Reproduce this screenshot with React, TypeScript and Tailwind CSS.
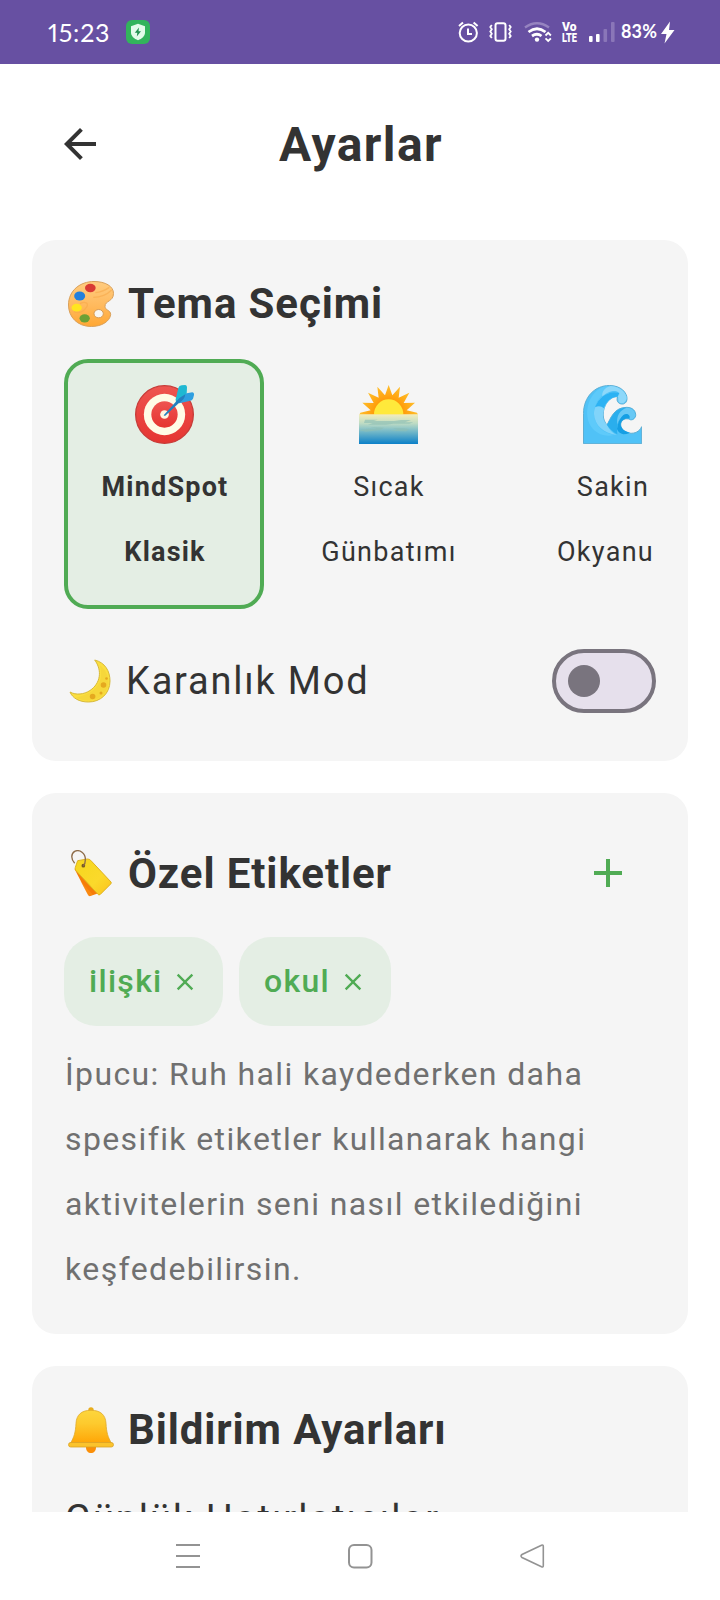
import React from "react";

function StatusBar() {
  return (
    <header className="flex h-16 shrink-0 items-center bg-[#6750a2] pl-12 text-white">
      <span className="w-[77px] font-['Lato'] text-[25px] leading-none tracking-[0.8px] proportional-nums">15:23</span>
      <svg width="26" height="26" viewBox="0 0 26 26">
        <rect x="1" y="1" width="24" height="24" rx="6" fill="#32b45c" />
        <path d="M13 4.8 20 7.2v6c0 4-3 6.400-7 8-4-1.600-7-4-7-8v-6z" fill="#e3fbea" />
        <path d="M14 8.500 9.800 13.800h2.500l-.5 3.700 4.200-5.200h-2.500z" fill="#219150" />
      </svg>
      <svg className="ml-[307px]" width="218" height="32" viewBox="458 16 218 32" fill="none">
        <g stroke="#fff" strokeWidth="2">
          <circle cx="468.300" cy="33" r="8.600" />
          <path d="M468 28.500v5.500h4M459 26l4-3.500M477.600 26l-4-3.500" />
          <rect x="495.500" y="23.200" width="10" height="17.600" rx="2" />
          <path strokeWidth="1.800" d="M491.800 25l-1.500 2 1.500 2.200-1.500 2.300 1.500 2.300-1.500 2.200 1.500 2M509.200 25l1.500 2-1.500 2.200 1.500 2.300-1.500 2.300 1.500 2.200-1.500 2" />
        </g>
        <path d="M525 27.500q12-8.500 24 0" stroke="#9684c0" strokeWidth="2.400" />
        <path d="M528.500 32q8.500-6.500 17 0M532 36q5-3.500 9.500 0" stroke="#fff" strokeWidth="2.800" />
        <circle cx="537" cy="39.600" r="2.200" fill="#fff" />
        <path d="M545.500 35.500l2.700-2.700 2.700 2.700M545.500 38.300l2.700 2.700 2.700-2.700" stroke="#fff" strokeWidth="1.800" />
        <rect x="589" y="36" width="3.600" height="6" rx="1" fill="#fff" />
        <rect x="596" y="34" width="3.600" height="8" rx="1" fill="#fff" />
        <rect x="603.500" y="29" width="3.600" height="13" rx="1" fill="#8a76b8" />
        <rect x="611" y="22" width="3.600" height="20" rx="1" fill="#8a76b8" />
        <text x="562" y="31.300" fill="#fff" fontFamily="Roboto" fontWeight="900" fontSize="12" textLength="14.500" lengthAdjust="spacingAndGlyphs">Vo</text>
        <text x="562" y="41.800" fill="#fff" fontFamily="Roboto" fontWeight="900" fontSize="12.500" textLength="15" lengthAdjust="spacingAndGlyphs">LTE</text>
        <text x="621" y="38" fill="#fff" fontFamily="Lato" fontWeight="700" fontSize="18" textLength="36">83%</text>
        <path d="M670 21.500 661 34h5.500l-2 9.500L674.500 30h-5.500z" fill="#fff" />
      </svg>
    </header>
  );
}

function Palette() {
  return (
    <svg width="46" height="46" viewBox="114 123 138 138">
      <defs>
        <linearGradient id="wood" x1="0" y1="0" x2="0" y2="1">
          <stop offset="0" stopColor="#ffcc80" />
          <stop offset=".55" stopColor="#ffb95c" />
          <stop offset="1" stopColor="#ffa733" />
        </linearGradient>
      </defs>
      <path d="M192 124.500C226 124.500 250.500 139 250.500 160C250.500 186 225 181 225 199C225 212 242 209 242 224C239 245 214 259.500 184 259.500C141 259.500 115.500 230 115.500 195C115.500 151 151 124.500 192 124.500Z" fill="url(#wood)" stroke="#d9a05a" strokeWidth="3" />
      <path d="M245 150q-22 22-55 22M238 142q-20 14-42 16M132 215c20 8 30-2 38-14s-6-18-20-10" fill="none" stroke="#f7a94a" strokeWidth="4" opacity=".6" />
      <ellipse cx="206" cy="221" rx="14" ry="12.500" fill="#f8f6f2" stroke="#d69b55" strokeWidth="3" />
      <ellipse cx="181" cy="144" rx="16" ry="12.500" fill="#d93a34" />
      <ellipse cx="149" cy="168" rx="16.500" ry="13.500" fill="#2380dc" />
      <ellipse cx="140" cy="203" rx="15.500" ry="11.500" fill="#ffe51f" />
      <ellipse cx="164" cy="235" rx="15.500" ry="12.500" fill="#6ba035" />
    </svg>
  );
}

function Target() {
  return (
    <svg width="59" height="59" viewBox="75 45 177 177">
      <defs>
        <linearGradient id="board" x1="0" y1="0" x2="0" y2="1">
          <stop offset="0" stopColor="#ee5550" />
          <stop offset=".5" stopColor="#ea4440" />
          <stop offset="1" stopColor="#e53531" />
        </linearGradient>
      </defs>
      <circle cx="163.500" cy="133.500" r="86.500" fill="url(#board)" stroke="#c73c39" strokeWidth="4" />
      <circle cx="163.500" cy="133.500" r="62" fill="#fffbe6" />
      <circle cx="163.500" cy="133.500" r="39.500" fill="url(#board)" />
      <circle cx="163.500" cy="133.500" r="13" fill="#fff5e0" />
      <path d="M197 88 205 54Q207 47 215 46L226 45Q231 46 231 52L230 72L206 98L198 98Z" fill="#1fb8d2" />
      <path d="M230 70 247 67Q253 68 252 75L249 86Q247 92 238 93L208 100L200 96Z" fill="#2f9fe0" />
      <path d="M161 136 197 96Q208 82 226 73Q224 90 206 100L165 138Z" fill="#2480bf" />
    </svg>
  );
}

function Sunset() {
  return (
    <svg width="59" height="59" viewBox="57 45 177 177">
      <defs>
        <linearGradient id="sea" x1="0" y1="0" x2="0" y2="1">
          <stop offset="0" stopColor="#f3edbb" />
          <stop offset=".3" stopColor="#bfdcc4" />
          <stop offset=".6" stopColor="#6fb6c8" />
          <stop offset="1" stopColor="#0b80c8" />
        </linearGradient>
        <radialGradient id="rays" gradientUnits="userSpaceOnUse" cx="146" cy="132" r="88">
          <stop offset=".5" stopColor="#ff9c0a" />
          <stop offset="1" stopColor="#ffc02c" />
        </radialGradient>
      </defs>
      <path d="M58 134 61 128 92 121 67 98 101 99 84 68 116 83 112 50 135 76 146 45 157 76 180 50 176 83 208 68 191 99 225 98 200 121 231 128 234 134Z" fill="url(#rays)" />
      <path d="M102 134a44 46 0 0 1 88 0z" fill="#ffe93b" />
      <rect x="57" y="133" width="177" height="89" fill="url(#sea)" />
      <path d="M75 149h38l-12 4h62l20-3h30l-18 7h25l-12 4h-48l-22 3h-54l14-5h-26zM57 181l25-5h28l-18-5 40 2-12 7-42 5zM150 183l22-4-14-4h36l14 3-10 6z" fill="#8ebfb5" opacity=".65" />
    </svg>
  );
}

function Wave() {
  return (
    <svg width="59" height="59" viewBox="729 45 177 177">
      <path d="M730.500 221V130C731 80 765 46.500 808 46.500C845 46.500 861 70 861 85C861 98 853 103 845 102C834 101 828 92 833 80C810 78 789 105 789.500 135C790 148 795 158 801 165C812 145 822 112 860 112C880 112 888 125 887 137C884 150 872 152 866 147C852 144 842 152 842 165C846 194 892 200 905 170V221Z" fill="#50c2f7" stroke="#5eaed3" strokeWidth="3" />
      <path d="M808 48C842 48 860 70 860 85C858 101 844 103 837 96C833 90 836 82 833 78C839 73 838 65 826 63C788 62 762 98 762 132C764 170 790 188 822 195C780 205 745 176 742 138C738 88 770 48 808 48Z" fill="#5ecafa" />
      <path d="M812 48C843 50 860 70 860 85C857 101 844 103 836 96C834 88 836 80 833 78C840 72 837 64 826 63C812 61 797 70 787 79C785 66 794 52 812 48Z" fill="#8dd8fa" />
      <path d="M840 72C800 54 763 94 762 132C764 166 790 190 830 195Q810 185 801 164C790 153 789 143 789.500 135C790 105 812 78 833 80Z" fill="#81d4fa" />
      <path d="M838 69C807 59 777 80 765 112Q780 105 792 115C798 95 814 79 833 80Z" fill="#2cb2f3" />
      <path d="M801 165C815 144 822 113 860 113C876 112 887 125 886 137C881 149 872 151 867 145C872 136 862 130 852 136C839 145 828 164 832 193Q814 184 801 165Z" fill="#2aaeed" />
      <path d="M860 113C876 112 887 125 886 137C881 149 872 151 867 145C872 136 864 131 852 136C842 142 836 150 832 164C828 137 840 120 860 113Z" fill="#69c9f5" />
      <path d="M868 146C872 134 860 128 850 135Q835 148 831 177Q836 190 850 193Q860 193 870 188C853 184 842 175 842 163C843 151 855 143 868 146Z" fill="#159fe4" />
    </svg>
  );
}

function Moon() {
  return (
    <svg width="42" height="44" viewBox="69 658.500 42 44">
      <path d="M94.700 659.500C105 662 110 670.500 110 680.500C110 693 100.500 701.500 88.500 701.500C79 701.500 72.500 697.500 70 691.500C76 694.800 84 694 90 690C100.500 683 102.500 670 94.700 659.500Z" fill="#fbdf3f" stroke="#d8b93a" strokeWidth="1" />
      <path d="M100 665C104 680 98 692 76 697C88 703 100 699 105 692C111 684 109 671 100 665Z" fill="#f4d33a" opacity=".7" />
      <g fill="#e5a91f">
        <circle cx="103.500" cy="684.500" r="2.800" />
        <circle cx="92.600" cy="696" r="2.800" />
        <circle cx="101" cy="692.500" r="1.500" />
        <circle cx="106.500" cy="678" r="1.300" />
      </g>
    </svg>
  );
}

function Tag() {
  return (
    <svg className="ml-[3px]" width="41" height="47" viewBox="122 92 123 141">
      <defs>
        <linearGradient id="card" x1="0" y1="0" x2="1" y2="1">
          <stop offset="0" stopColor="#f5d71d" />
          <stop offset=".6" stopColor="#fbd92b" />
          <stop offset="1" stopColor="#fcc21d" />
        </linearGradient>
      </defs>
      <path d="M133 150 147 138 204 222 178 231Q174 230 172 225Z" fill="#f67c08" />
      <path d="M150 185 172 225Q174 231 180 229L188 226Z" fill="#ff9a1f" opacity=".4" />
      <path d="M142 124 171 119Q177 119 181 123L242 188Q244 191 241 194L209 226Q205 228 202 224L136 153Q133 149 135 144Z" fill="url(#card)" stroke="#dfb21f" strokeWidth="3" />
      <circle cx="159" cy="139" r="5.500" fill="#765b21" />
      <path d="M133 132C122 121 121 103 133 96C148 89 166 102 165 121Q165 134 159 140" fill="none" stroke="#8d6b48" strokeWidth="4" />
    </svg>
  );
}

function Bell() {
  return (
    <svg width="46" height="46" viewBox="68 1407 46 46">
      <defs>
        <linearGradient id="brass" x1="0" y1="0" x2="0" y2="1">
          <stop offset="0" stopColor="#fdd63d" />
          <stop offset=".4" stopColor="#fdca2e" />
          <stop offset="1" stopColor="#ffa506" />
        </linearGradient>
      </defs>
      <circle cx="91" cy="1410" r="2.700" fill="#e9ad1c" />
      <path d="M86 1445h10v2.500c0 3.500-2.200 5.500-5 5.500s-5-2-5-5.500z" fill="#fb8f08" />
      <path d="M91 1410.300c9.500 0 14.500 4.500 15 13 .4 9 2 14 5.500 20h-41c3.500-6 5.100-11 5.500-20 .5-8.500 5.500-13 15-13z" fill="url(#brass)" stroke="#dfaa2c" strokeWidth=".8" />
      <rect x="68.500" y="1442.500" width="45" height="4.500" rx="2.200" fill="#fbc32c" stroke="#dba227" strokeWidth=".8" />
    </svg>
  );
}

function SectionTitle({ icon, children }: { icon: React.ReactNode; children: React.ReactNode }) {
  return (
    <h2 className="flex h-[63px] items-center text-[42px] font-bold tracking-[0.9px] whitespace-nowrap">
      <span className="w-[64px] pl-1">{icon}</span>
      {children}
    </h2>
  );
}

function ThemeCard({ icon, children, selected }: { icon: React.ReactNode; children: React.ReactNode; selected?: boolean }) {
  return (
    <button
      className={
        "flex h-[250px] w-[200px] shrink-0 flex-col items-center rounded-3xl border-4 pt-[22px] pl-[2px] text-[27px] leading-[65px] " +
        (selected ? "border-[#50ab54] bg-[#e4eee4] font-bold tracking-[1.200px]" : "border-transparent tracking-[1.300px]")
      }
    >
      <span className="h-[70px] pr-px">{icon}</span>
      {children}
    </button>
  );
}

function Chip({ label, width }: { label: string; width: string }) {
  return (
    <span className={"flex h-[89px] items-center justify-between rounded-[32px] bg-[#e4eee4] pr-6 pl-[25px] text-[32px] font-medium tracking-[1.300px] text-[#50ab54] " + width}>
      <span className="pb-[2px]">{label}</span>
      <svg width="28" height="28" viewBox="0 0 24 24" fill="currentColor">
        <path d="M19 6.410 17.590 5 12 10.590 6.410 5 5 6.410 10.590 12 5 17.590 6.410 19 12 13.410 17.590 19 19 17.590 13.410 12z" />
      </svg>
    </span>
  );
}

export default function App() {
  return (
    <div className="flex h-[1600px] w-[720px] flex-col overflow-hidden bg-white font-['Roboto',sans-serif] text-[#333333]">
      <StatusBar />
      <main className="flex h-[1448px] flex-col overflow-hidden px-8">
        <div className="flex h-[176px] shrink-0 items-center px-6 pb-4">
          <svg width="48" height="48" viewBox="0 0 24 24" fill="currentColor">
            <path d="M20 11H7.830l5.590-5.590L12 4l-8 8 8 8 1.410-1.410L7.830 13H20v-2z" />
          </svg>
          <h1 className="flex-1 pt-[2px] pr-[46px] text-center text-[48px] font-bold tracking-[1.400px]">Ayarlar</h1>
        </div>
        <section className="h-[521px] shrink-0 rounded-3xl bg-[#f5f5f5] p-8">
          <SectionTitle icon={<Palette />}>Tema Seçimi</SectionTitle>
          <div className="mt-6 flex gap-6 overflow-hidden">
            <ThemeCard icon={<Target />} selected>
              <span>MindSpot</span>
              <span>Klasik</span>
            </ThemeCard>
            <ThemeCard icon={<Sunset />}>
              <span>Sıcak</span>
              <span>Günbatımı</span>
            </ThemeCard>
            <ThemeCard icon={<Wave />}>
              <span>Sakin</span>
              <span className="pr-[15px]">Okyanu</span>
            </ThemeCard>
          </div>
          <div className="mt-6 flex h-24 items-center text-[38px] tracking-[1.800px]">
            <span className="w-[62px] pl-[5px]">
              <Moon />
            </span>
            <span className="flex-1">Karanlık Mod</span>
            <span className="flex h-16 w-[104px] items-center rounded-full border-4 border-[#79747e] bg-[#e6e0ec] pl-3">
              <span className="size-8 rounded-full bg-[#79747e]" />
            </span>
          </div>
        </section>
        <section className="mt-8 h-[541px] shrink-0 rounded-3xl bg-[#f5f5f5] p-8">
          <div className="flex h-24 items-center justify-between">
            <SectionTitle icon={<Tag />}>Özel Etiketler</SectionTitle>
            <svg className="mr-6 text-[#50ab54]" width="48" height="48" viewBox="0 0 24 24" fill="currentColor">
              <path d="M19 13h-6v6h-2v-6H5v-2h6V5h2v6h6v2z" />
            </svg>
          </div>
          <div className="mt-4 flex gap-4">
            <Chip label="ilişki" width="w-[159px]" />
            <Chip label="okul" width="w-[152px]" />
          </div>
          <p className="mt-4 pl-px text-[32px] leading-[65px] tracking-[1.380px] whitespace-nowrap text-[#707070]">
            İpucu: Ruh hali kaydederken daha
            <br />
            spesifik etiketler kullanarak hangi
            <br />
            aktivitelerin seni nasıl etkilediğini
            <br />
            keşfedebilirsin.
          </p>
        </section>
        <section className="mt-8 h-[400px] shrink-0 rounded-3xl bg-[#f5f5f5] p-8">
          <SectionTitle icon={<Bell />}>Bildirim Ayarları</SectionTitle>
          <p className="mt-[26px] pl-px text-[38px] leading-[65px] tracking-[2px]">Günlük Hatırlatıcılar</p>
        </section>
      </main>
      <nav className="flex h-[88px] shrink-0 items-center bg-white">
        <svg width="720" height="88" viewBox="0 1512 720 88" fill="none" stroke="#939393" strokeWidth="2">
          <path d="M176 1545h24M176 1556h24M176 1567h24" />
          <rect x="349" y="1545" width="22.500" height="22.500" rx="5" />
          <path strokeWidth="1.600" d="M541.500 1545.200 522 1554.500q-2 1.500 0 3l19.500 9.300q1.800.6 1.800-1.300v-19q0-1.900-1.800-1.300z" />
        </svg>
      </nav>
    </div>
  );
}
